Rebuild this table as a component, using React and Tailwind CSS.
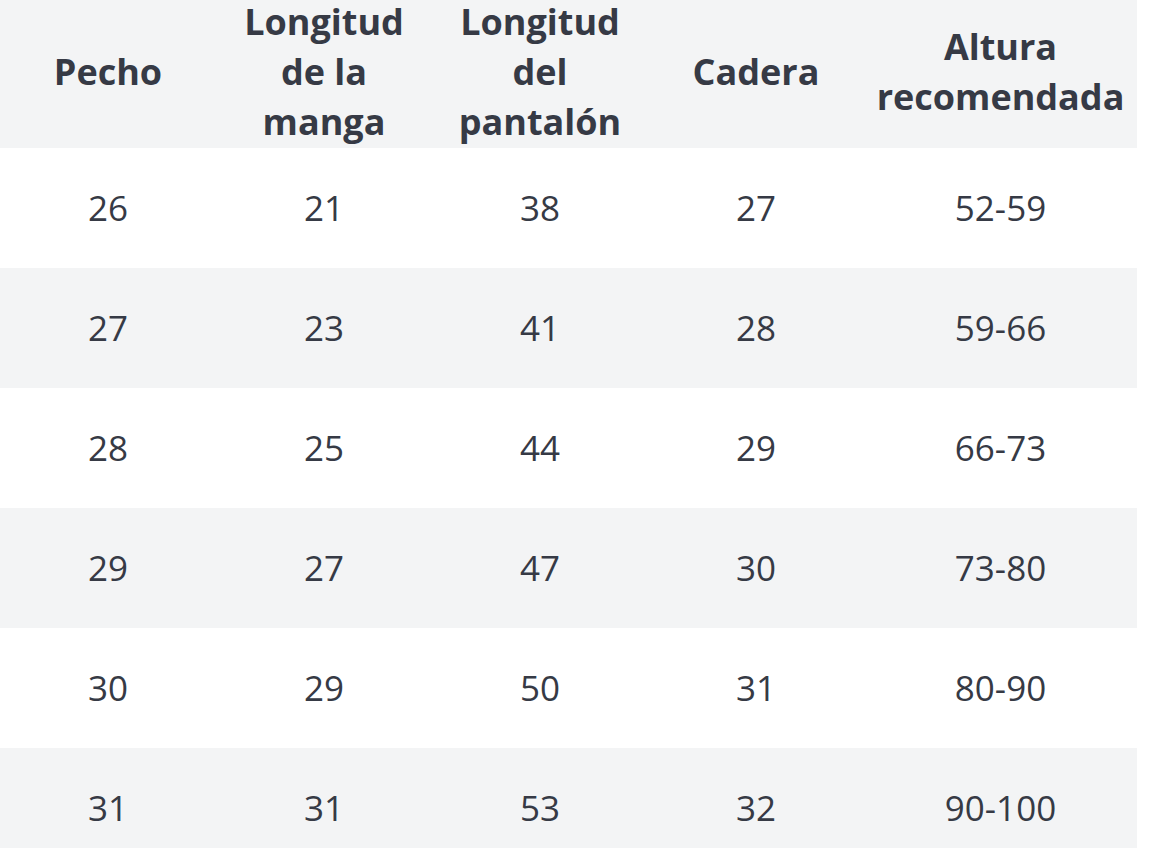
const headers = [
  ["Pecho"],
  ["Longitud", "de la", "manga"],
  ["Longitud", "del", "pantalón"],
  ["Cadera"],
  ["Altura", "recomendada"],
];

const rows = [
  ["26", "21", "38", "27", "52-59"],
  ["27", "23", "41", "28", "59-66"],
  ["28", "25", "44", "29", "66-73"],
  ["29", "27", "47", "30", "73-80"],
  ["30", "29", "50", "31", "80-90"],
  ["31", "31", "53", "32", "90-100"],
];

const cols = "grid grid-cols-[216px_216px_216px_216px_273px]";

export default function App() {
  return (
    <div
      className="w-[1174px] h-[848px] overflow-hidden bg-white text-[#363a45]"
      style={{ fontFamily: '"Open Sans", "Noto Sans", sans-serif' }}
    >
      <div className="w-[1137px]">
        <div className={`${cols} grid-rows-[148px] h-[148px] bg-[#f3f4f5] overflow-hidden`}>
          {headers.map((lines, i) => (
            <div
              key={i}
              className="flex flex-col items-center justify-center pb-[4px] text-[36px] font-bold leading-[50px] text-center"
            >
              {lines.map((l) => (
                <span key={l}>{l}</span>
              ))}
            </div>
          ))}
        </div>
        {rows.map((row, r) => (
          <div
            key={r}
            className={`${cols} h-[120px] ${r % 2 === 1 ? "bg-[#f3f4f5]" : "bg-white"}`}
          >
            {row.map((v, i) => (
              <div key={i} className="flex items-center justify-center text-[35px]">
                {v}
              </div>
            ))}
          </div>
        ))}
      </div>
    </div>
  );
}
